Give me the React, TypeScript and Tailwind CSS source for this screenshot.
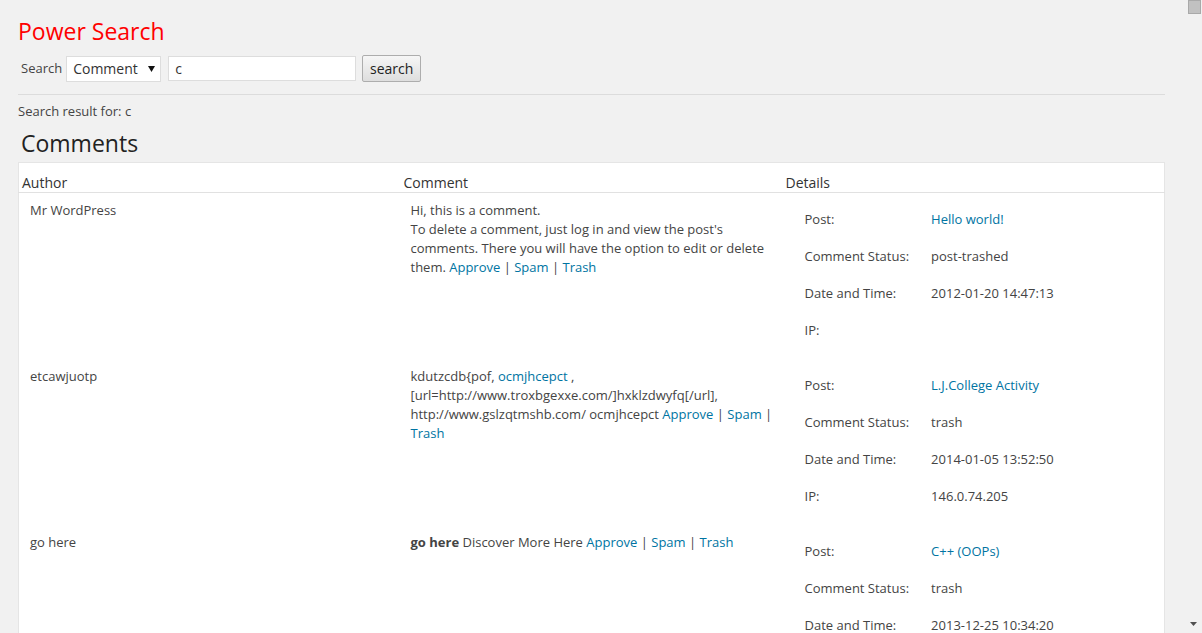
import React from 'react';

type Detail = { label: string; value: string; link?: boolean };

type Row = {
  author: string;
  comment: React.ReactNode;
  details: Detail[];
};

const linkCls = 'text-[#0074a2]';

function Actions() {
  return (
    <>
      <a className={linkCls} href="#">Approve</a> | <a className={linkCls} href="#">Spam</a> |{' '}
      <a className={linkCls} href="#">Trash</a>
    </>
  );
}

const rows: Row[] = [
  {
    author: 'Mr WordPress',
    comment: (
      <>
        Hi, this is a comment.
        <br />
        To delete a comment, just log in and view the post's comments. There you will have the option to edit or
        delete them. <Actions />
      </>
    ),
    details: [
      { label: 'Post:', value: 'Hello world!', link: true },
      { label: 'Comment Status:', value: 'post-trashed' },
      { label: 'Date and Time:', value: '2012-01-20 14:47:13' },
      { label: 'IP:', value: '' },
    ],
  },
  {
    author: 'etcawjuotp',
    comment: (
      <>
        kdutzcdb{'{'}pof, <a className={linkCls} href="#">ocmjhcepct</a> ,
        [url=http://www.troxbgexxe.com/]hxklzdwyfq[/url], http://www.gslzqtmshb.com/ ocmjhcepct <Actions />
      </>
    ),
    details: [
      { label: 'Post:', value: 'L.J.College Activity', link: true },
      { label: 'Comment Status:', value: 'trash' },
      { label: 'Date and Time:', value: '2014-01-05 13:52:50' },
      { label: 'IP:', value: '146.0.74.205' },
    ],
  },
  {
    author: 'go here',
    comment: (
      <>
        <b className="font-bold">go here</b> Discover More Here <Actions />
      </>
    ),
    details: [
      { label: 'Post:', value: 'C++ (OOPs)', link: true },
      { label: 'Comment Status:', value: 'trash' },
      { label: 'Date and Time:', value: '2013-12-25 10:34:20' },
      { label: 'IP:', value: '' },
    ],
  },
];

function DetailsTable({ details }: { details: Detail[] }) {
  return (
    <table className="border-collapse">
      <tbody>
        {details.map((d) => (
          <tr key={d.label}>
            <td className="w-[124px] whitespace-nowrap pl-[12px] pr-[12px] py-[9px] align-top">{d.label}</td>
            <td className="whitespace-nowrap pl-[10px] pr-[12px] py-[9px] align-top">
              {d.link ? (
                <a className={linkCls} href="#">{d.value}</a>
              ) : (
                d.value
              )}
            </td>
          </tr>
        ))}
      </tbody>
    </table>
  );
}

function App() {
  return (
    <div className="flex h-[633px] overflow-hidden bg-[#f1f1f1] font-['Open_Sans',sans-serif] text-[13px] leading-[19px] text-[#444]">
      <div className="min-w-0 flex-1 pl-[18px] pr-[20px]">
        <h2 className="mt-[17px] text-[23px] leading-[29px] text-[#ff0000]">Power Search</h2>

        <form className="mt-[9px] flex items-center" onSubmit={(e) => e.preventDefault()}>
          <label className="ml-[3px] mr-[4px] text-[13px]">Search</label>
          <div className="relative">
            <select
              defaultValue="comment"
              className="h-[26px] w-[95px] appearance-none border border-[#ddd] bg-white pl-[6px] text-[14px] text-[#333] outline-none"
            >
              <option value="comment">Comment</option>
              <option value="post">Post</option>
            </select>
            <svg className="pointer-events-none absolute right-[6px] top-[10px]" width="7" height="6" viewBox="0 0 7 6">
              <path d="M0 0h7L3.5 6z" fill="#111" />
            </svg>
          </div>
          <input
            defaultValue="c"
            className="ml-[7px] h-[25px] w-[188px] border border-[#ddd] bg-white px-[6px] text-[14px] text-[#333] outline-none"
          />
          <button className="ml-[6px] h-[27px] w-[59px] rounded-[2px] border border-[#adadad] bg-gradient-to-b from-[#f6f6f6] to-[#dedede] text-[14px] text-[#222]">
            search
          </button>
        </form>

        <hr className="mt-[12px] border-0 border-t border-[#dcdcdc]" />

        <p className="mt-[7px]">Search result for: c</p>

        <h3 className="ml-[3px] mt-[8px] text-[23px] leading-[29px] text-[#222]">Comments</h3>

        <table className="mt-[4px] w-full table-fixed border-collapse border border-[#e5e5e5] bg-white">
          <thead>
            <tr className="border-b border-[#e1e1e1] text-left text-[14px] text-[#333]">
              <th className="w-1/3 px-[3px] pb-0 pt-[10px] font-normal leading-[19px]">Author</th>
              <th className="w-1/3 px-[3px] pb-0 pt-[10px] font-normal leading-[19px]">Comment</th>
              <th className="w-1/3 px-[3px] pb-0 pt-[10px] font-normal leading-[19px]">Details</th>
            </tr>
          </thead>
          <tbody>
            {rows.map((r) => (
              <tr key={r.author}>
                <td className="pb-[10px] pl-[11px] pr-[10px] pt-[8px] align-top">{r.author}</td>
                <td className="pb-[10px] pl-[10px] pr-[10px] pt-[8px] align-top">{r.comment}</td>
                <td className="pb-[10px] pl-[10px] pr-[10px] pt-[8px] align-top">
                  <DetailsTable details={r.details} />
                </td>
              </tr>
            ))}
          </tbody>
        </table>
      </div>

      <div className="flex w-[17px] shrink-0 flex-col items-center justify-between">
        <div className="ml-[2px] mt-0 h-[14px] w-[13px] border border-[#a9a9a9] bg-[#c1c1c1]" />
        <svg className="mb-[7px]" width="7" height="4" viewBox="0 0 7 4">
          <path d="M0 0h7L3.5 4z" fill="#505050" />
        </svg>
      </div>
    </div>
  );
}

export default App;
